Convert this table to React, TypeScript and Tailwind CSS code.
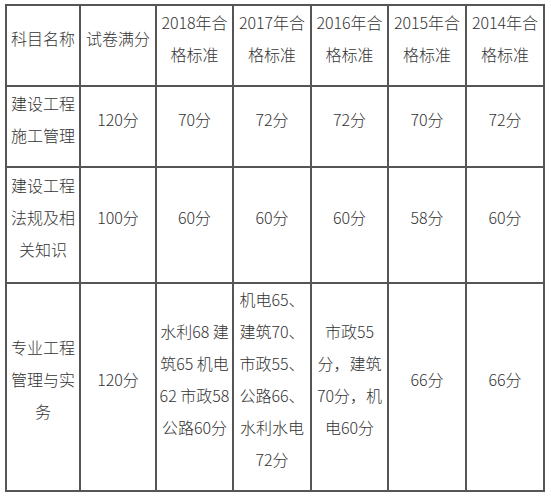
const headers: string[][] = [
  ['科目名称'],
  ['试卷满分'],
  ['2018年合', '格标准'],
  ['2017年合', '格标准'],
  ['2016年合', '格标准'],
  ['2015年合', '格标准'],
  ['2014年合', '格标准'],
];

const rows: string[][][] = [
  [['建设工程', '施工管理'], ['120分'], ['70分'], ['72分'], ['72分'], ['70分'], ['72分']],
  [['建设工程', '法规及相', '关知识'], ['100分'], ['60分'], ['60分'], ['60分'], ['58分'], ['60分']],
  [
    ['专业工程', '管理与实', '务'],
    ['120分'],
    ['水利68 建', '筑65 机电', '62 市政58', '公路60分'],
    ['机电65、', '建筑70、', '市政55、', '公路66、', '水利水电', '72分'],
    ['市政55', '分，建筑', '70分，机', '电60分'],
    ['66分'],
    ['66分'],
  ],
];

function Cell({ lines }: { lines: string[] }) {
  return (
    <div className="flex flex-col items-center justify-center border-r-2 border-b-2 border-[#555] text-center">
      <div className="pb-4">
        {lines.map((line, i) => (
          <div key={i} className="whitespace-pre leading-8">
            {line}
          </div>
        ))}
      </div>
    </div>
  );
}

export default function App() {
  return (
    <div className="min-h-[497px] w-[551px] bg-white pt-[4px] pl-[5px]">
      <div
        className="grid w-[540px] grid-cols-[74px_76px_77px_78px_77px_78px_78px] grid-rows-[81px_81px_116px_208px] border-l-2 border-t-2 border-[#555] text-[16px] font-light text-[#333]"
        style={{ fontFamily: '"Noto Sans CJK SC", "Noto Sans", sans-serif' }}
      >
        {headers.map((h, i) => (
          <Cell key={`h${i}`} lines={h} />
        ))}
        {rows.map((row, r) =>
          row.map((cell, c) => <Cell key={`${r}-${c}`} lines={cell} />)
        )}
      </div>
    </div>
  );
}
